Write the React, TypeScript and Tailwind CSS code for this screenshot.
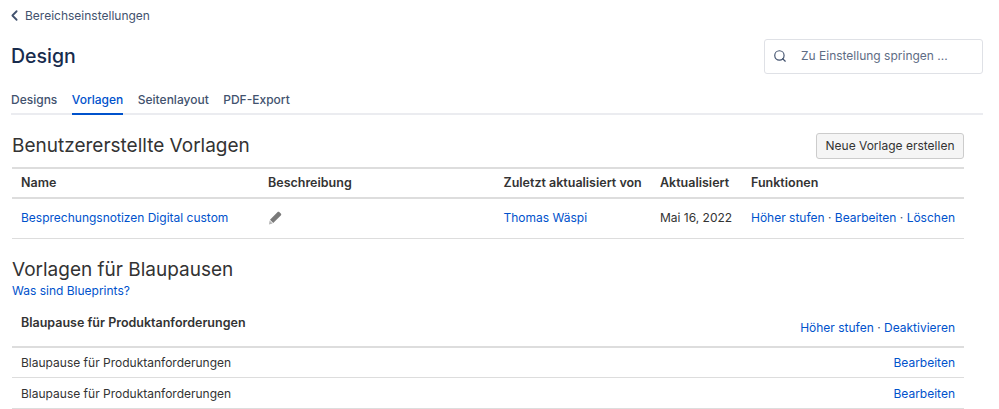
import { ChevronLeft, Search } from 'lucide-react';

const font = 'font-["Inter","Liberation_Sans",sans-serif]';

function Pencil() {
  return (
    <svg width="14" height="14" viewBox="0 0 14 14" className="block">
      <path d="M9.4 1.2c.6-.6 1.5-.6 2.1 0l1.3 1.3c.6.6.6 1.5 0 2.1L5.2 12 2 8.7z" fill="#7a7a7a" />
      <path d="M1.6 9.4l3 3-3.6 1.1z" fill="#b5b5b5" />
    </svg>
  );
}

function Dot() {
  return <span className="text-[#42526e]"> · </span>;
}

export default function App() {
  return (
    <div className={`${font} w-[999px] h-[409px] overflow-hidden bg-white text-[12px] text-[#333]`}>
      <div className="pl-[11px] pr-[16px]">
        {/* Back link */}
        <div className="flex items-center h-[31px] text-[#42526e]">
          <ChevronLeft size={17} strokeWidth={2.5} className="-ml-[5px] text-[#42526e]" />
          <span className="ml-[2px]">Bereichseinstellungen</span>
        </div>

        {/* Title and search */}
        <div className="flex items-center justify-between h-[50px] mt-[1px]">
          <h1 className="text-[19.5px] font-medium text-[#172b4d] leading-none">Design</h1>
          <div className="flex items-center w-[219px] h-[35px] border border-[#dfe1e6] rounded-[3px] mb-[2px]">
            <Search size={14} strokeWidth={2} className="ml-[8px] text-[#42526e]" />
            <span className="ml-[14px] text-[#5e6c84]">Zu Einstellung springen ...</span>
          </div>
        </div>

        {/* Tabs */}
        <div className="flex gap-[14.5px] h-[32px] border-b-2 border-[#ebecf0] font-medium text-[#42526e] mt-[1px]">
          <div className="pt-[8px]">Designs</div>
          <div className="pt-[8px] h-[32px] border-b-2 border-[#0052cc] text-[#0052cc]">Vorlagen</div>
          <div className="pt-[8px]">Seitenlayout</div>
          <div className="pt-[8px]">PDF-Export</div>
        </div>
      </div>

      <div className="w-[952px] ml-[12px]">
        {/* Custom templates */}
        <div className="flex items-center justify-between h-[52px] pt-[9px]">
          <h2 className="text-[19px] leading-none text-[#333]">Benutzererstellte Vorlagen</h2>
          <button className="h-[26px] w-[148px] bg-[#f5f5f5] border border-[#ccc] rounded-[3px] text-[#333]">
            Neue Vorlage erstellen
          </button>
        </div>

        <div className="grid grid-cols-[247px_235.5px_156.5px_91px_1fr] items-center h-[32px] border-t-2 border-b-2 border-[#ddd] text-[12.5px] font-semibold">
          <div className="pl-[9px]">Name</div>
          <div className="pl-[9px]">Beschreibung</div>
          <div className="pl-[9px]">Zuletzt aktualisiert von</div>
          <div className="pl-[9px]">Aktualisiert</div>
          <div className="pl-[9px]">Funktionen</div>
        </div>
        <div className="grid grid-cols-[247px_235.5px_156.5px_91px_1fr] items-center h-[40px] pb-[2px] border-b border-[#ddd]">
          <div className="pl-[9px] text-[#0052cc]">Besprechungsnotizen Digital custom</div>
          <div className="pl-[9px]"><Pencil /></div>
          <div className="pl-[9px] text-[#0052cc]">Thomas Wäspi</div>
          <div className="pl-[9px]">Mai 16, 2022</div>
          <div className="pl-[9px] pr-[9px] text-right text-[#0052cc] whitespace-nowrap">
            Höher stufen<Dot />Bearbeiten<Dot />Löschen
          </div>
        </div>

        {/* Blueprints */}
        <h2 className="text-[19px] leading-none text-[#333] mt-[21px]">Vorlagen für Blaupausen</h2>
        <div className="text-[#0052cc] mt-[3px] leading-[18px]">Was sind Blueprints?</div>

        <div className="flex justify-between h-[48px] border-b-2 border-[#ddd] px-[9px]">
          <div className="text-[12.5px] font-semibold pt-[14px] leading-[18px]">Blaupause für Produktanforderungen</div>
          <div className="text-[#0052cc] pt-[19px] leading-[18px]">Höher stufen<Dot />Deaktivieren</div>
        </div>
        <div className="flex items-center justify-between h-[30px] border-b border-[#ddd] px-[9px]">
          <span>Blaupause für Produktanforderungen</span>
          <span className="text-[#0052cc]">Bearbeiten</span>
        </div>
        <div className="flex items-center justify-between h-[31px] pt-[1px] border-b border-[#ddd] px-[9px]">
          <span>Blaupause für Produktanforderungen</span>
          <span className="text-[#0052cc]">Bearbeiten</span>
        </div>
      </div>
    </div>
  );
}
